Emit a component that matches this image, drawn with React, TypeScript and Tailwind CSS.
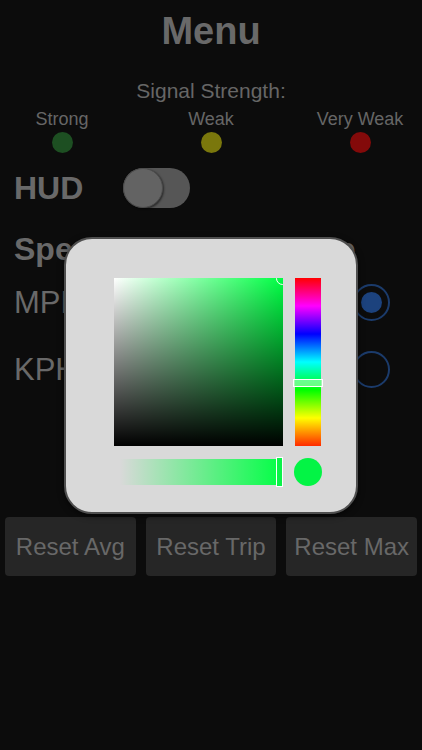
const signals = [
  { label: "Strong", color: "bg-[#1d4f22]" },
  { label: "Weak", color: "bg-[#7a770c]" },
  { label: "Very Weak", color: "bg-[#830a0a]" },
];

const resets = ["Reset Avg", "Reset Trip", "Reset Max"];

function Radio({ checked }: { checked?: boolean }) {
  return (
    <div className="flex h-[37px] w-[37px] items-center justify-center rounded-full border-2 border-[#1b3b6b]">
      {checked && <div className="h-[21px] w-[21px] rounded-full bg-[#1c427d]" />}
    </div>
  );
}

function ColorPicker() {
  return (
    <div className="absolute left-[64px] top-[237px] h-[277px] w-[294px] rounded-[28px] border-2 border-[#4f4f4f] bg-[#d9d9d9] pl-[48px] pt-[39px] shadow-[0_2px_6px_rgba(0,0,0,0.6)]">
      <div className="flex gap-[12px]">
        {/* saturation / brightness square */}
        <div className="relative h-[168px] w-[169px] overflow-hidden bg-[#00ff44]">
          <div className="absolute inset-0 bg-[linear-gradient(to_right,#ffffff,rgba(255,255,255,0))]" />
          <div className="absolute inset-0 bg-[linear-gradient(to_top,#000000,rgba(0,0,0,0))]" />
          <div className="absolute right-[-6px] top-[-6px] h-[13px] w-[13px] rounded-full border border-white" />
        </div>
        {/* hue bar */}
        <div className="relative h-[168px] w-[26px] bg-[linear-gradient(to_bottom,#ff0000,#ff00ff,#0000ff,#00ffff,#00ff00,#ffff00,#ff2a00)]">
          <div className="absolute left-[-2px] right-[-2px] top-[101px] h-[8px] border-[1.5px] border-white bg-[rgba(150,255,170,0.7)]" />
        </div>
      </div>
      <div className="mt-[11px] flex h-[30px] items-center">
        <div className="relative ml-[6px] h-[26px] w-[163px] bg-[linear-gradient(to_right,rgba(0,255,68,0),#00ff44)]">
          <div className="absolute right-0 top-[-2px] h-[30px] w-[7px] border-[1.5px] border-white bg-[#0cf24a]" />
        </div>
        <div className="ml-[11px] h-[28px] w-[28px] rounded-full bg-[#03f445]" />
      </div>
    </div>
  );
}

export default function App() {
  return (
    <div className="relative h-[750px] w-[422px] overflow-hidden bg-[#0c0c0c] font-['Liberation_Sans',Arial,sans-serif] text-[#696969]">
      <h1 className="pt-[12px] text-center text-[38px] font-bold leading-none">Menu</h1>

      <p className="mt-[30px] text-center text-[21px] leading-none text-[#666]">Signal Strength:</p>
      <div className="mt-[9px] flex justify-between px-[2px]">
        {signals.map((s) => (
          <div key={s.label} className="flex w-[120px] flex-col items-center">
            <span className="text-[18px] leading-none text-[#666]">{s.label}</span>
            <span className={`mt-[4px] h-[21px] w-[21px] rounded-full ${s.color}`} />
          </div>
        ))}
      </div>

      <div className="mt-[14px] flex h-[41px] items-center pl-[14px]">
        <span className="text-[32px] font-bold leading-none">HUD</span>
        <div className="ml-[40px] flex h-[40px] w-[67px] items-center rounded-full bg-[#565656]">
          <div className="h-[40px] w-[40px] rounded-full border border-[#4c4c4c] bg-[#636363] shadow-[1px_1px_2px_rgba(0,0,0,0.5)]" />
        </div>
      </div>

      <p className="mt-[25px] pl-[14px] text-[32px] font-bold leading-none">Speed Unit Preference</p>

      <div className="mt-[19px] flex h-[37px] items-center justify-between pl-[14px] pr-[32px]">
        <span className="text-[31px] leading-none">MPH</span>
        <Radio checked />
      </div>
      <div className="mt-[30px] flex h-[37px] items-center justify-between pl-[14px] pr-[32px]">
        <span className="text-[31px] leading-none">KPH</span>
        <Radio />
      </div>

      <div className="mt-[129px] flex gap-[10px] px-[5px]">
        {resets.map((r) => (
          <button
            key={r}
            className="flex h-[59px] flex-1 items-center justify-center rounded-[4px] bg-[#262626] text-[24px] text-[#686868]"
          >
            {r}
          </button>
        ))}
      </div>

      <ColorPicker />
    </div>
  );
}
